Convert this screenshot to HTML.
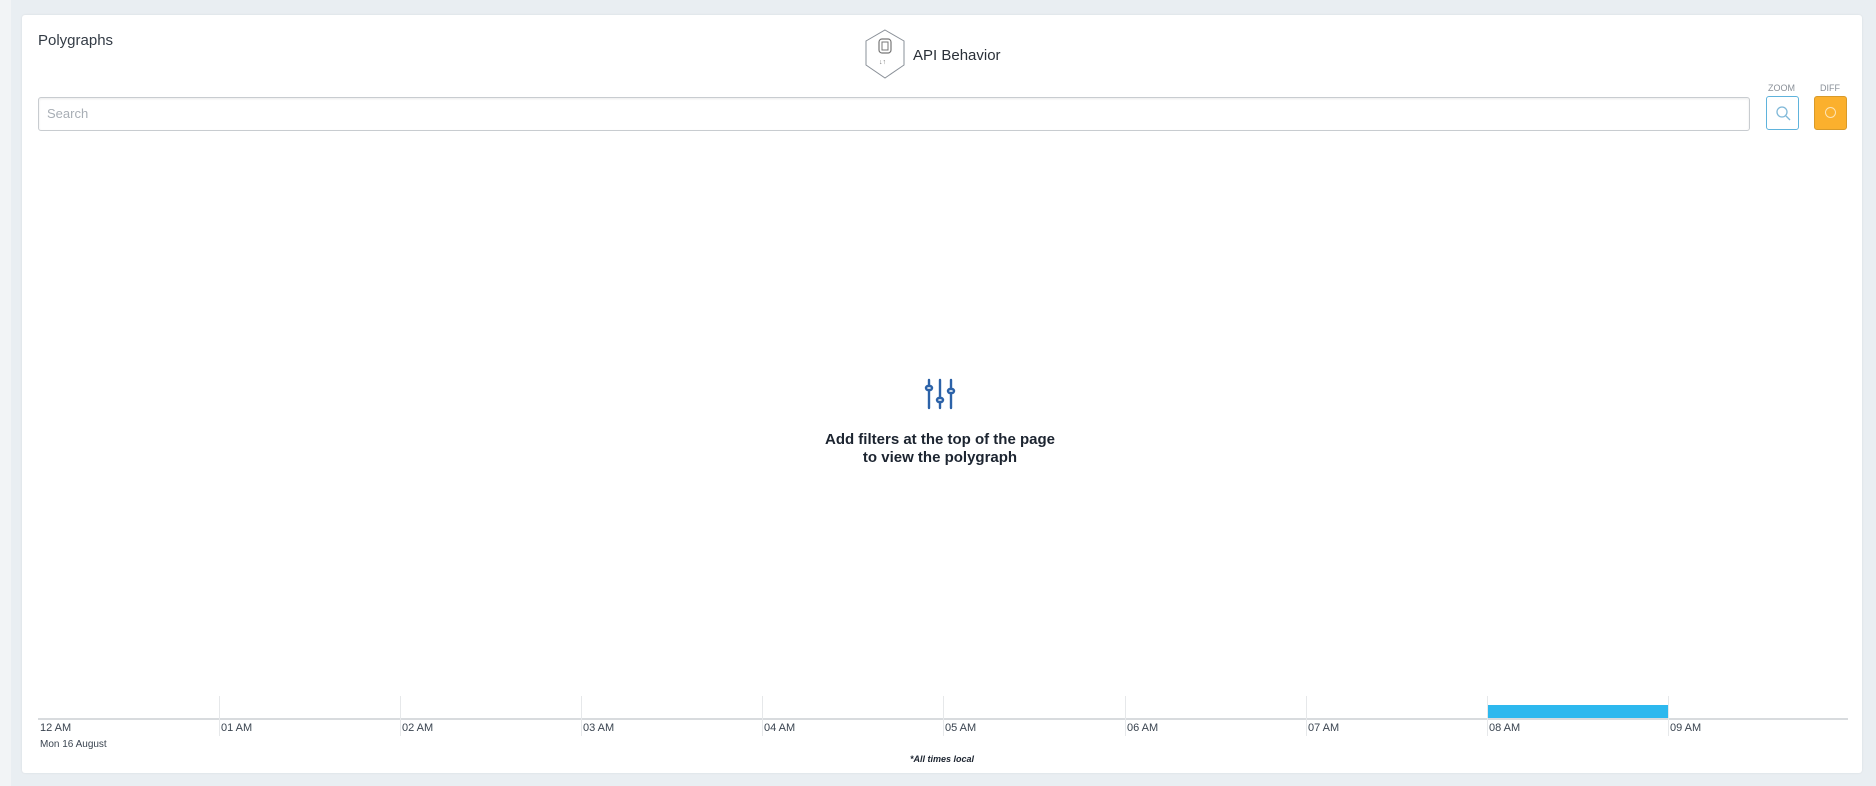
<!DOCTYPE html>
<html><head><meta charset="utf-8"><style>
*{margin:0;padding:0;box-sizing:border-box}
body{width:1876px;height:786px;background:#e9eef2;position:relative;overflow:hidden;font-family:"Liberation Sans",sans-serif;color:#2a3038}
.strip{position:absolute;left:0;top:0;width:11px;height:786px;background:#f2f4f6}
.card{position:absolute;left:22px;top:15px;width:1840px;height:758px;background:#fff;border-radius:3px;box-shadow:0 0 2px rgba(0,0,0,.08)}
.abs{position:absolute}
.lbl{font-size:11px;color:#3a4450}
.tick{position:absolute;top:696px;width:1px;height:40px;background:#e6e8ea}
</style></head><body>
<div class="strip"></div>
<div class="card"></div>
<div class="abs" style="left:38px;top:32px;font-size:15px;color:#333b45">Polygraphs</div>
<svg class="abs" style="left:864px;top:29px" width="42" height="50" viewBox="0 0 42 50">
<polygon points="21,1 40,12 40,36 21,49 2,36 2,12" fill="none" stroke="#8a9098" stroke-width="1"/>
<rect x="15" y="10" width="12" height="14" rx="3" fill="none" stroke="#777" stroke-width="1.2"/>
<rect x="18" y="13" width="6" height="8" fill="none" stroke="#777" stroke-width="1"/>
<text x="15" y="35" font-size="7" fill="#777" font-family="Liberation Sans">↓↑</text>
</svg>
<div class="abs" style="left:913px;top:47px;font-size:15px;color:#2a3038">API Behavior</div>
<div class="abs" style="left:38px;top:97px;width:1712px;height:34px;border:1px solid #c8ccd0;border-radius:3px;box-shadow:inset 0 1px 2px rgba(0,0,0,.08)"></div>
<div class="abs" style="left:47px;top:106px;font-size:13px;color:#a8aeb5">Search</div>
<div class="abs" style="left:1768px;top:83px;font-size:9px;color:#8a9098">ZOOM</div>
<div class="abs" style="left:1820px;top:83px;font-size:9px;color:#8a9098">DIFF</div>
<div class="abs" style="left:1766px;top:96px;width:33px;height:34px;border:1.5px solid #5fb3dc;border-radius:3px"></div>
<svg class="abs" style="left:1774px;top:104px" width="18" height="18" viewBox="0 0 18 18"><circle cx="8" cy="8" r="5" fill="none" stroke="#7fb8d8" stroke-width="1.3"/><line x1="12" y1="12" x2="16" y2="16" stroke="#7fb8d8" stroke-width="1.3"/></svg>
<div class="abs" style="left:1814px;top:96px;width:33px;height:34px;background:#fbb02d;border:1px solid #d89a2a;border-radius:3px"></div>
<div class="abs" style="left:1825px;top:107px;width:11px;height:11px;border:1px solid #fde4b5;border-radius:50%"></div>
<svg class="abs" style="left:924px;top:378px" width="32" height="34" viewBox="0 0 32 34">
<g stroke="#2c62a8" stroke-width="2.4" fill="none" stroke-linecap="round">
<line x1="5" y1="2" x2="5" y2="30"/><line x1="16" y1="2" x2="16" y2="30"/><line x1="27" y1="2" x2="27" y2="30"/>
<rect x="2" y="8" width="6" height="4" rx="2" fill="#fff"/><rect x="13" y="20" width="6" height="4" rx="2" fill="#fff"/><rect x="24" y="11" width="6" height="4" rx="2" fill="#fff"/>
</g></svg>
<div class="abs" style="left:740px;top:431px;width:400px;text-align:center;font-size:15px;font-weight:bold;line-height:18px;color:#1c2430">Add filters at the top of the page<br>to view the polygraph</div>
<div class="abs" style="left:1488px;top:705px;width:180px;height:13px;background:#2db8ee"></div>
<div class="abs" style="left:38px;top:718px;width:1810px;height:2px;background:#d8dbde"></div>
<div class="tick" style="left:219px"></div><div class="tick" style="left:400px"></div><div class="tick" style="left:581px"></div><div class="tick" style="left:762px"></div><div class="tick" style="left:943px"></div><div class="tick" style="left:1125px"></div><div class="tick" style="left:1306px"></div><div class="tick" style="left:1487px"></div><div class="tick" style="left:1668px"></div>
<div class="abs lbl" style="left:40px;top:722px">12 AM</div>
<div class="abs lbl" style="left:221px;top:722px">01 AM</div>
<div class="abs lbl" style="left:402px;top:722px">02 AM</div>
<div class="abs lbl" style="left:583px;top:722px">03 AM</div>
<div class="abs lbl" style="left:764px;top:722px">04 AM</div>
<div class="abs lbl" style="left:945px;top:722px">05 AM</div>
<div class="abs lbl" style="left:1127px;top:722px">06 AM</div>
<div class="abs lbl" style="left:1308px;top:722px">07 AM</div>
<div class="abs lbl" style="left:1489px;top:722px">08 AM</div>
<div class="abs lbl" style="left:1670px;top:722px">09 AM</div>
<div class="abs" style="left:40px;top:739px;font-size:10px;color:#3a4450">Mon 16 August</div>
<div class="abs" style="left:892px;top:754px;width:100px;text-align:center;font-size:9px;font-style:italic;font-weight:bold;color:#1c2430">*All times local</div>
</body></html>
